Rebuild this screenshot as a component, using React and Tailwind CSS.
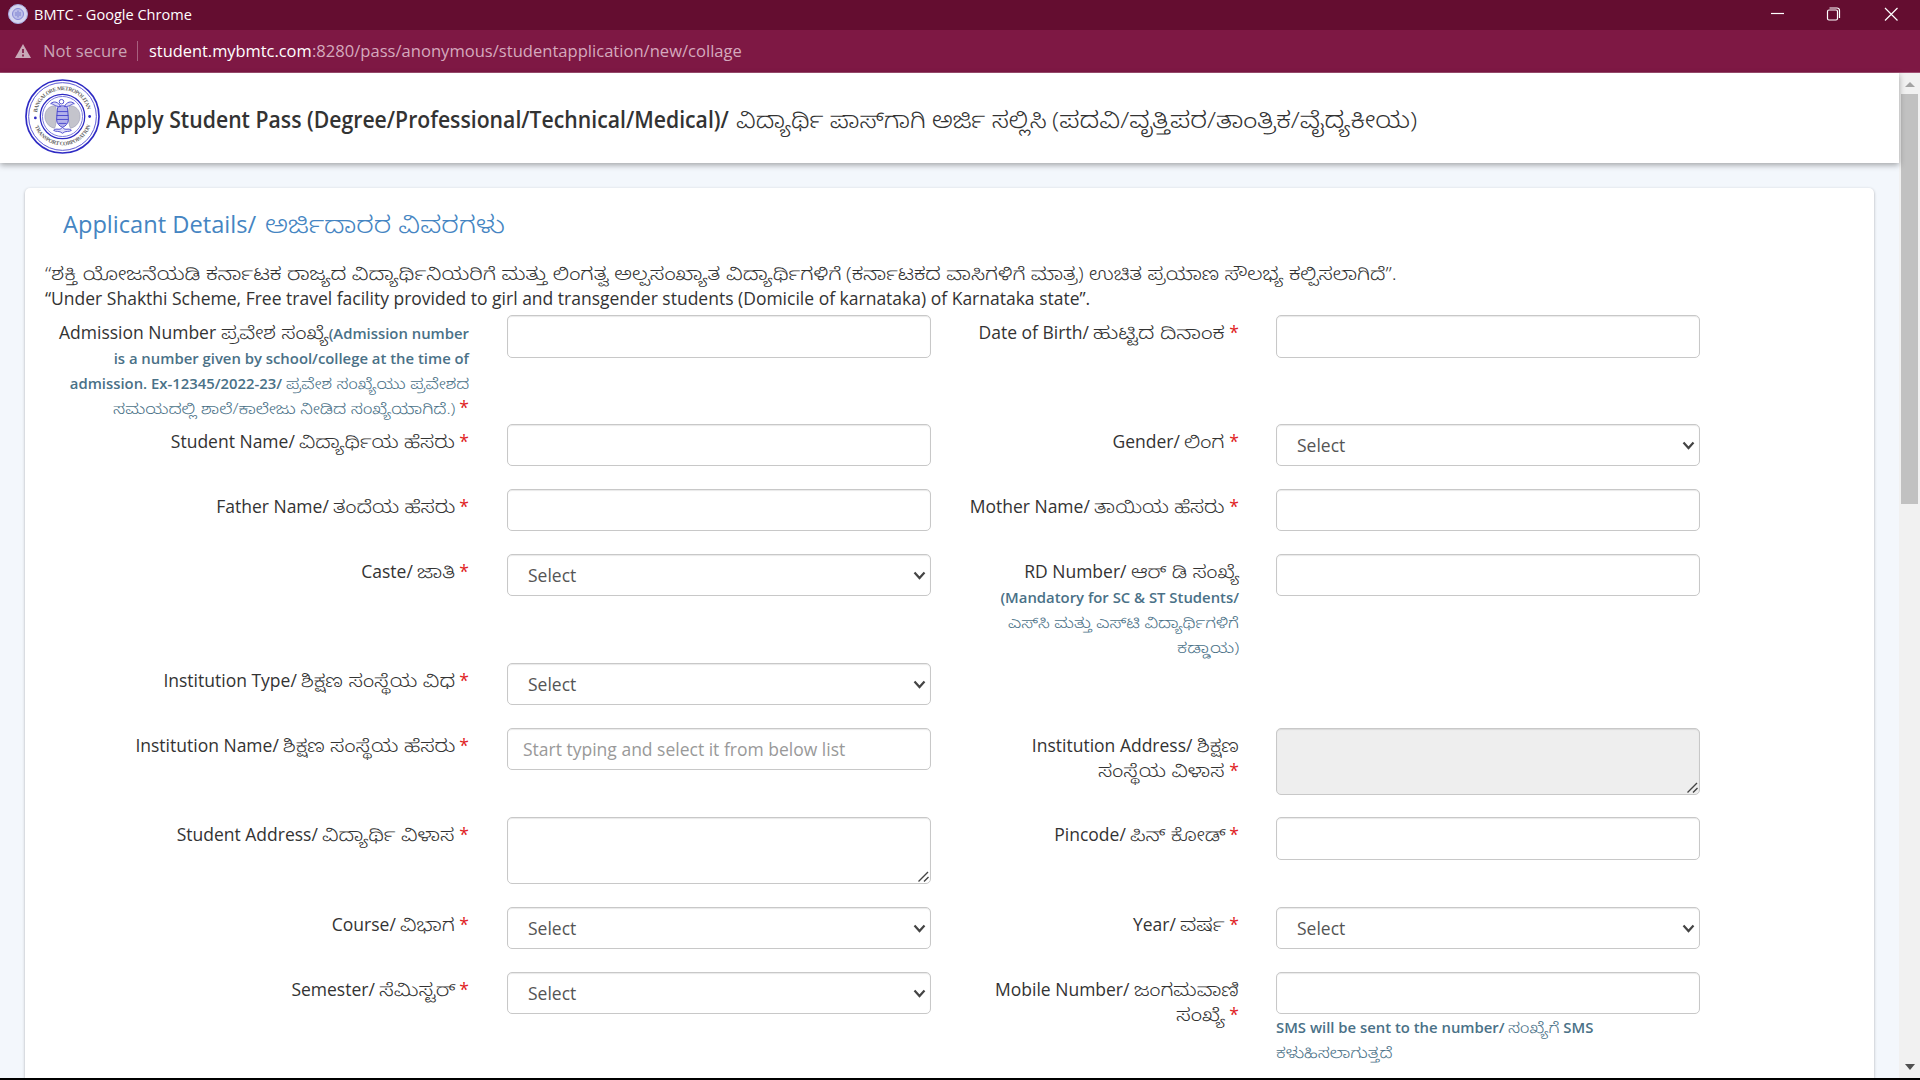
import { useLayoutEffect, useRef } from "react";

/* Text run that is condensed or widened to an exact width. */
function Fit({ w, className = "", children }) {
  const ref = useRef(null);
  useLayoutEffect(() => {
    const el = ref.current;
    el.style.transform = `scaleX(${w / el.offsetWidth})`;
  }, [w]);
  return (
    <span className={"inline-block whitespace-nowrap text-left " + className} style={{ width: w }}>
      <span ref={ref} className="inline-block origin-left">
        {children}
      </span>
    </span>
  );
}

/* Kannada run, set in the light cut. */
const Kn = ({ w, className = "", children }) => (
  <Fit w={w} className={"font-light " + className}>
    {children}
  </Fit>
);

const Star = () => <span className="ml-[4px] text-[#e02222]">*</span>;

function Label({ children }) {
  return <div className="pt-[5px] text-right leading-[25px] whitespace-nowrap">{children}</div>;
}

const Small = ({ children }) => (
  <span className="text-[14.875px] font-semibold leading-[20px] text-[#4a7187]">{children}</span>
);

const box =
  "block w-full rounded-[5px] border border-[#c8c8c8] bg-white px-[15px] text-[17.5px] text-[#555] shadow-[inset_0_1px_1px_rgba(0,0,0,0.09)] outline-none placeholder:text-[#999]";

function Input({ placeholder, tall }) {
  return <input placeholder={placeholder} className={box + (tall ? " h-[43px]" : " h-[42px]")} />;
}

function Select() {
  return (
    <div className="relative">
      <select className={box + " h-[42px] appearance-none pl-[20px]"}>
        <option>Select</option>
      </select>
      <svg className="absolute right-[5px] top-[16px] h-[11px] w-[13px]" viewBox="0 0 13 11" fill="none">
        <path d="M1.5 2.5 6.5 8l5-5.500" stroke="#444" strokeWidth="2.2" />
      </svg>
    </div>
  );
}

function Area({ disabled }) {
  return (
    <div className="relative">
      <textarea
        disabled={disabled}
        className={
          "block h-[67px] w-full resize-none rounded-[5px] border border-[#c8c8c8] shadow-[inset_0_1px_1px_rgba(0,0,0,0.09)] " +
          (disabled ? "bg-[#eee]" : "bg-white")
        }
      />
      <svg className="absolute bottom-[2px] right-[2px] h-[11px] w-[11px]" viewBox="0 0 11 11">
        <path d="M0.500 10.500 10 1M6 10.500 10.500 6" stroke="#444" strokeWidth="1.400" fill="none" />
      </svg>
    </div>
  );
}

function Row({ h, label, field, label2, field2 }) {
  return (
    <div className={"grid grid-cols-[424px_462px_308px_461px] " + h}>
      <Label>{label}</Label>
      <div className="ml-[38px]">{field}</div>
      <div>{label2 && <Label>{label2}</Label>}</div>
      <div className="ml-[37px]">{field2}</div>
    </div>
  );
}

function Seal({ className }) {
  return (
    <svg className={className} viewBox="0 0 76 76" fill="none">
      <circle cx="38" cy="38" r="37" fill="#fff" stroke="#2f2bc4" strokeWidth="1.700" />
      <circle cx="38" cy="38" r="34.300" stroke="#5a57d2" strokeWidth="1" />
      <circle cx="38" cy="38" r="22.500" stroke="#2f2bc4" strokeWidth="1.300" />
      <circle cx="38" cy="38" r="20.300" stroke="#6f6cda" strokeWidth="0.900" />
      <path id="seal-top" d="M12.200 34A26 26 0 0 1 63.800 34" />
      <path id="seal-bottom" d="M9.600 47A30 30 0 0 0 66.400 47" />
      <g fill="#666" fontFamily="Liberation Serif, serif" fontWeight="700" fontSize="5.600">
        <text>
          <textPath href="#seal-top" textLength="72">BANGALORE METROPOLITAN</textPath>
        </text>
        <text>
          <textPath href="#seal-bottom" textLength="73" startOffset="1">TRANSPORT CORPORATION</textPath>
        </text>
      </g>
      <circle cx="10.500" cy="39.500" r="1.400" fill="#2f2bc4" />
      <circle cx="65.500" cy="38" r="1.400" fill="#2f2bc4" />
      <path d="M31 27c-9 0-12 8-10.500 14 1.500 5 5 8 9.500 9 2-5 3-15 1-23ZM45 27c9 0 12 8 10.500 14-1.500 5-5 8-9.500 9-2-5-3-15-1-23Z" fill="#c4c4cc" stroke="#9a9ab4" strokeWidth="0.600" />
      <path d="M33 29c3-2.500 7-2.500 10 0l1 12c0 4-3 7-6 8-3-1-6-4-6-8Z" fill="#b3b1ea" stroke="#4340cc" strokeWidth="0.900" />
      <path d="M32.500 33h11M32 37h12M32 41h12M34 45h8" stroke="#4340cc" strokeWidth="0.900" />
      <path d="M36 28c-2-5-7-6-10-3 3 0 4 3 10 3Zm4 0c2-5 7-6 10-3-3 0-4 3-10 3ZM29 52c3-3 6 1 9-3 3 4 6 0 9 3-2 2-6 0-9 3-3-3-7-1-9-3Z" stroke="#4340cc" strokeWidth="0.900" fill="#dddcf7" />
      <circle cx="37" cy="23" r="2.300" stroke="#4340cc" strokeWidth="0.900" />
    </svg>
  );
}

export default function App() {
  return (
    <div className="flex h-[1080px] w-[1920px] flex-col overflow-hidden bg-[#f3f7fc] font-['Open_Sans','Noto_Sans_Kannada',sans-serif] text-[17.5px] text-[#333]">
      <div className="flex h-[30px] shrink-0 items-center bg-[#640d30] pb-[2px] text-white">
        <svg className="ml-[8px] h-5 w-5" viewBox="0 0 20 20" fill="none">
          <circle cx="10" cy="10" r="9.500" fill="#d5d6f0" stroke="#a9aae0" />
          <circle cx="10" cy="10" r="5.500" fill="#bcbee9" stroke="#8688d6" />
          <path d="M10 6.500v7M8 8v4M12 8v4" stroke="#7d80d0" />
        </svg>
        <div className="ml-[6px] text-[15px] leading-[28px]">
          <Fit w={158}>BMTC - Google Chrome</Fit>
        </div>
        <svg className="ml-auto mr-[22px] h-[14px] w-[128px]" viewBox="0 0 128 14" fill="none" stroke="#fff" strokeWidth="1.200">
          <path d="M1 6.500h13" />
          <rect x="57.500" y="3" width="10" height="10" rx="1.500" />
          <path d="M59.500 1h7.500a2.500 2.500 0 0 1 2.500 2.500V11" />
          <path d="m115 1 12.500 12.500M127.500 1 115 13.500" />
        </svg>
      </div>

      <div className="flex h-[43px] shrink-0 items-center border-b border-[#a04f72] bg-[#7e1844] text-[17px]">
        <svg className="ml-[15px] h-[14px] w-4" viewBox="0 0 16 14">
          <path d="M8 0 16 14H0Z" fill="#c9a9b8" />
          <path d="M8 5v4M8 10.500v2" stroke="#7e1844" strokeWidth="1.700" />
        </svg>
        <Fit w={84} className="ml-[12px] text-[#c9a3b4]">Not secure</Fit>
        <div className="ml-[10px] h-5 w-px bg-[#a8607f]" />
        <Fit w={163} className="ml-[11px] text-white">student.mybmtc.com</Fit>
        <Fit w={430} className="text-[#d5a9bd]">:8280/pass/anonymous/studentapplication/new/collage</Fit>
      </div>

      <div className="flex min-h-0 flex-1">
        <div className="flex min-w-0 flex-1 flex-col">
          <div className="z-10 flex h-[90px] shrink-0 items-start bg-white shadow-[0_2px_6px_rgba(0,0,0,0.35)]">
            <Seal className="ml-[25px] mt-[6px] h-[75px] w-[75px]" />
            <div className="ml-[6px] mt-[31px] whitespace-nowrap text-[22.500px] font-semibold leading-[32px]">
              <Fit w={623}>Apply Student Pass (Degree/Professional/Technical/Medical)/</Fit>
              <Kn w={311} className="ml-[7px]">ವಿದ್ಯಾರ್ಥಿ ಪಾಸ್‌ಗಾಗಿ ಅರ್ಜಿ ಸಲ್ಲಿಸಿ</Kn>
              <Kn w={365} className="ml-[5px]">(ಪದವಿ/ವೃತ್ತಿಪರ/ತಾಂತ್ರಿಕ/ವೈದ್ಯಕೀಯ)</Kn>
            </div>
          </div>

          <div className="ml-[25px] mt-[25px] w-[1849px] flex-1 rounded-t-[5px] bg-white pl-5 shadow-[0_1px_3px_rgba(0,0,0,0.3)]">
            <h2 className="ml-[18px] pt-[19px] text-[24px] leading-[34px] text-[#4585c2]">
              <Fit w={193}>Applicant Details/</Fit>
              <Kn w={240} className="ml-[9px]">ಅರ್ಜಿದಾರರ ವಿವರಗಳು</Kn>
            </h2>
            <div className="mt-[20px] leading-[25px]">
              <div className="flex">
                <Kn w={797}>“ಶಕ್ತಿ ಯೋಜನೆಯಡಿ ಕರ್ನಾಟಕ ರಾಜ್ಯದ ವಿದ್ಯಾರ್ಥಿನಿಯರಿಗೆ ಮತ್ತು ಲಿಂಗತ್ವ ಅಲ್ಪಸಂಖ್ಯಾತ ವಿದ್ಯಾರ್ಥಿಗಳಿಗೆ</Kn>
                <Kn w={238} className="ml-[4px]">(ಕರ್ನಾಟಕದ ವಾಸಿಗಳಿಗೆ ಮಾತ್ರ)</Kn>
                <Kn w={308} className="ml-[5px]">ಉಚಿತ ಪ್ರಯಾಣ ಸೌಲಭ್ಯ ಕಲ್ಪಿಸಲಾಗಿದೆ”.</Kn>
              </div>
              <div>
                <Fit w={1045}>“Under Shakthi Scheme, Free travel facility provided to girl and transgender students (Domicile of karnataka) of Karnataka state”.</Fit>
              </div>
            </div>

            <div className="mt-[4px]">
              <Row
                h="h-[109px]"
                label={
                  <>
                    Admission Number <Kn w={108}>ಪ್ರವೇಶ ಸಂಖ್ಯೆ</Kn>
                    <Small>(Admission number<br />
                      is a number given by school/college at the time of<br />
                      admission. Ex-12345/2022-23/ <Kn w={183}>ಪ್ರವೇಶ ಸಂಖ್ಯೆಯು ಪ್ರವೇಶದ</Kn><br />
                      <Kn w={342}>ಸಮಯದಲ್ಲಿ ಶಾಲೆ/ಕಾಲೇಜು ನೀಡಿದ ಸಂಖ್ಯೆಯಾಗಿದೆ.)</Kn></Small>
                    <Star />
                  </>
                }
                field={<Input tall />}
                label2={<>Date of Birth/ <Kn w={132}>ಹುಟ್ಟಿದ ದಿನಾಂಕ</Kn><Star /></>}
                field2={<Input tall />}
              />
              <Row
                h="h-[65px]"
                label={<>Student Name/ <Kn w={156}>ವಿದ್ಯಾರ್ಥಿಯ ಹೆಸರು</Kn><Star /></>}
                field={<Input />}
                label2={<>Gender/ <Kn w={41}>ಲಿಂಗ</Kn><Star /></>}
                field2={<Select />}
              />
              <Row
                h="h-[65px]"
                label={<>Father Name/ <Kn w={122}>ತಂದೆಯ ಹೆಸರು</Kn><Star /></>}
                field={<Input />}
                label2={<>Mother Name/ <Kn w={131}>ತಾಯಿಯ ಹೆಸರು</Kn><Star /></>}
                field2={<Input />}
              />
              <Row
                h="h-[109px]"
                label={<>Caste/ <Kn w={38}>ಜಾತಿ</Kn><Star /></>}
                field={<Select />}
                label2={
                  <>
                    RD Number/ <Kn w={108}>ಆರ್ ಡಿ ಸಂಖ್ಯೆ</Kn><br />
                    <Small>(Mandatory for SC &amp; ST Students/<br />
                      <Kn w={231}>ಎಸ್‌ಸಿ ಮತ್ತು ಎಸ್‌ಟಿ ವಿದ್ಯಾರ್ಥಿಗಳಿಗೆ</Kn><br />
                      <Kn w={62}>ಕಡ್ಡಾಯ)</Kn></Small>
                  </>
                }
                field2={<Input />}
              />
              <Row
                h="h-[65px]"
                label={<>Institution Type/ <Kn w={154}>ಶಿಕ್ಷಣ ಸಂಸ್ಥೆಯ ವಿಧ</Kn><Star /></>}
                field={<Select />}
              />
              <Row
                h="h-[89px]"
                label={<>Institution Name/ <Kn w={172}>ಶಿಕ್ಷಣ ಸಂಸ್ಥೆಯ ಹೆಸರು</Kn><Star /></>}
                field={<Input placeholder="Start typing and select it from below list" />}
                label2={
                  <>
                    Institution Address/ <Kn w={42}>ಶಿಕ್ಷಣ</Kn><br />
                    <Kn w={127}>ಸಂಸ್ಥೆಯ ವಿಳಾಸ</Kn><Star />
                  </>
                }
                field2={<Area disabled />}
              />
              <Row
                h="h-[90px]"
                label={<>Student Address/ <Kn w={133}>ವಿದ್ಯಾರ್ಥಿ ವಿಳಾಸ</Kn><Star /></>}
                field={<Area />}
                label2={<>Pincode/ <Kn w={95}>ಪಿನ್ ಕೋಡ್</Kn><Star /></>}
                field2={<Input tall />}
              />
              <Row
                h="h-[65px]"
                label={<>Course/ <Kn w={55}>ವಿಭಾಗ</Kn><Star /></>}
                field={<Select />}
                label2={<>Year/ <Kn w={45}>ವರ್ಷ</Kn><Star /></>}
                field2={<Select />}
              />
              <Row
                h="h-[106px]"
                label={<>Semester/ <Kn w={76}>ಸೆಮಿಸ್ಟರ್</Kn><Star /></>}
                field={<Select />}
                label2={
                  <>
                    Mobile Number/ <Kn w={105}>ಜಂಗಮವಾಣಿ</Kn><br />
                    <Kn w={49}>ಸಂಖ್ಯೆ</Kn><Star />
                  </>
                }
                field2={
                  <>
                    <Input />
                    <div className="leading-[25px]">
                      <Small>
                        SMS will be sent to the number/ <Kn w={51}>ಸಂಖ್ಯೆಗೆ</Kn> SMS<br />
                        <Kn w={117}>ಕಳುಹಿಸಲಾಗುತ್ತದೆ</Kn>
                      </Small>
                    </div>
                  </>
                }
              />
            </div>
          </div>
        </div>

        <div className="flex w-[21px] flex-col items-center bg-[#f1f1f1]">
          <svg className="mt-[9px] h-[5px] w-[10px]" viewBox="0 0 10 5">
            <path d="M5 0 10 5H0Z" fill="#a3a3a3" />
          </svg>
          <div className="mt-[7px] h-[410px] w-[17px] bg-[#c1c1c1]" />
          <svg className="mb-[8px] mt-auto h-[6px] w-[10px]" viewBox="0 0 10 6">
            <path d="M0 0H10L5 6Z" fill="#505050" />
          </svg>
        </div>
      </div>
      <div className="z-20 h-[2px] shrink-0 bg-black" />
    </div>
  );
}
